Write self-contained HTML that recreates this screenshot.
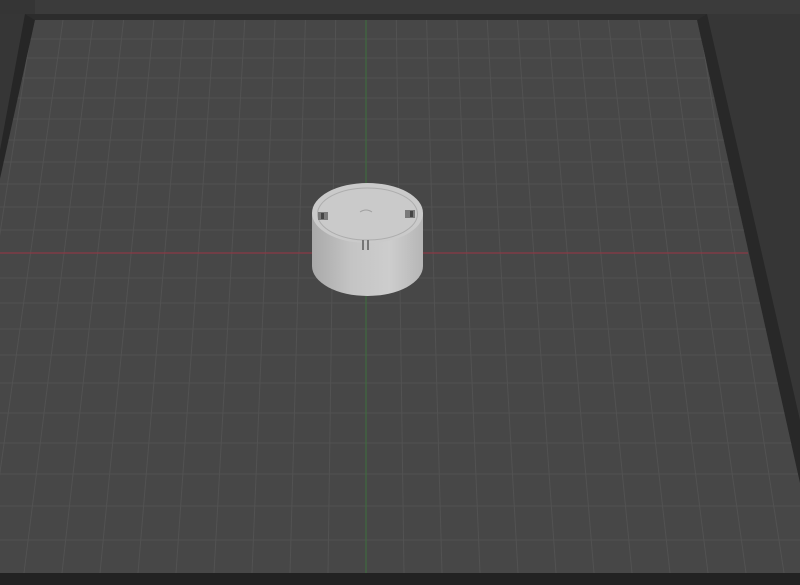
<!DOCTYPE html>
<html><head><meta charset="utf-8"><style>html,body{margin:0;padding:0;background:#3a3a3a;overflow:hidden}svg{display:block}</style></head>
<body>
<svg width="800" height="585" viewBox="0 0 800 585" xmlns="http://www.w3.org/2000/svg">
<defs>
<linearGradient id="side" x1="0" x2="1" y1="0" y2="0">
<stop offset="0" stop-color="#a9a9a9"/><stop offset="0.35" stop-color="#c4c4c4"/><stop offset="0.7" stop-color="#cdcdcd"/><stop offset="1" stop-color="#b6b6b6"/>
</linearGradient>
<clipPath id="pl"><polygon points="35,20 697,20 820,573 -87,573"/></clipPath>
</defs>
<rect width="800" height="585" fill="#363636"/>
<rect x="0" y="0" width="800" height="14" fill="#3b3b3b"/>
<polygon points="0,0 35,0 35,14 0,14" fill="#353535"/>
<polygon points="25,14 707,14 697,20 35,20" fill="#2c2c2c"/>
<polygon points="25,14 35,20 0,185 0,150" fill="#262626"/>
<polygon points="707,14 697,20 820,573 835,573" fill="#282828"/>
<polygon points="35,20 697,20 820,573 -87,573" fill="#474747"/>
<g clip-path="url(#pl)" stroke="#515151" stroke-width="1" fill="none">
<path d="M0 39H800M0 58H800M0 78H800M0 98H800M0 119H800M0 140H800M0 162H800M0 184H800M0 207H800M0 230H800M0 278H800M0 303H800M0 329H800M0 355H800M0 383H800M0 413H800M0 443H800M0 474H800M0 506H800M0 540H800"/>
</g>
<g clip-path="url(#pl)" stroke="#525252" stroke-width="1">
<line x1="335.7" y1="20" x2="328" y2="573"/><line x1="305.4" y1="20" x2="290" y2="573"/><line x1="275.1" y1="20" x2="252" y2="573"/><line x1="244.8" y1="20" x2="214" y2="573"/><line x1="214.5" y1="20" x2="176" y2="573"/><line x1="184.2" y1="20" x2="138" y2="573"/><line x1="153.9" y1="20" x2="100" y2="573"/><line x1="123.6" y1="20" x2="62" y2="573"/><line x1="93.3" y1="20" x2="24" y2="573"/><line x1="63" y1="20" x2="-14" y2="573"/><line x1="32.7" y1="20" x2="-52" y2="573"/>
<line x1="396.3" y1="20" x2="404" y2="573"/><line x1="426.6" y1="20" x2="442" y2="573"/><line x1="456.9" y1="20" x2="480" y2="573"/><line x1="487.2" y1="20" x2="518" y2="573"/><line x1="517.5" y1="20" x2="556" y2="573"/><line x1="547.8" y1="20" x2="594" y2="573"/><line x1="578.1" y1="20" x2="632" y2="573"/><line x1="608.4" y1="20" x2="670" y2="573"/><line x1="638.7" y1="20" x2="708" y2="573"/><line x1="669" y1="20" x2="746" y2="573"/><line x1="699.3" y1="20" x2="784" y2="573"/>
</g>
<line x1="366" y1="20" x2="366" y2="573" stroke="#3f6a3f" stroke-width="1.2"/>
<line x1="0" y1="253" x2="748" y2="253" stroke="#8a3a45" stroke-width="1.2"/>
<rect x="0" y="573" width="800" height="12" fill="#222"/>
<path d="M312 213 L312 266 A55.5 30 0 0 0 423 266 L423 213 Z" fill="url(#side)"/>
<ellipse cx="367.5" cy="213" rx="55.5" ry="30" fill="#cacaca"/>
<ellipse cx="367.5" cy="214" rx="50" ry="26" fill="none" stroke="#adadad" stroke-width="1"/>
<rect x="318" y="212" width="10" height="8" fill="#7a7a7a"/><rect x="321" y="213" width="3" height="6" fill="#444"/>
<rect x="405" y="210" width="10" height="8" fill="#7a7a7a"/><rect x="410" y="211" width="3" height="6" fill="#444"/>
<rect x="362" y="240" width="2" height="10" fill="#777"/><rect x="367" y="240" width="2" height="10" fill="#777"/>
<path d="M360 212 q6 -4 12 0" stroke="#a0a0a0" fill="none"/>
</svg>
</body></html>
